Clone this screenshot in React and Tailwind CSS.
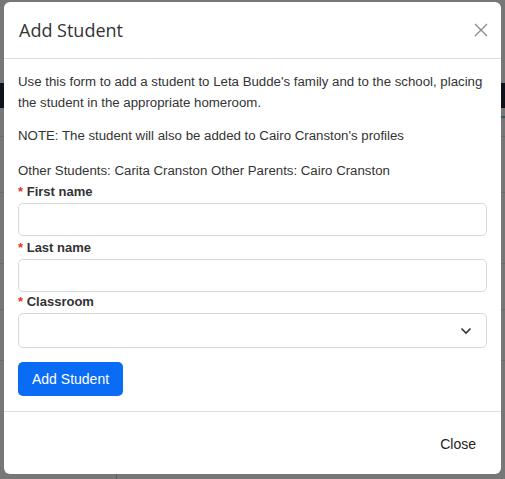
import { useState } from 'react';

// page that sits under the dimmed backdrop
function PageBehind() {
  return (
    <div className="absolute inset-0 bg-[#777777]">
      <div className="mt-[83px] h-[25px] bg-[#0e131b]" />
      <div className="ml-[480px] mt-[8px] h-[2px] bg-[#3e5566]" />
      <div className="mt-[18px] h-px bg-[#6a6a6a]" />
      <div className="mt-[55px] h-px bg-[#6a6a6a]" />
      <div className="mt-[70px] h-px bg-[#6a6a6a]" />
      <div className="mt-[45px] h-px bg-[#6a6a6a]" />
      <div className="mt-[50px] h-px bg-[#6a6a6a]" />
      <div className="absolute left-[116px] top-[474px] h-[5px] w-px bg-[#5e5e5e]" />
    </div>
  );
}

function Field({ label, children }) {
  return (
    <div>
      <label className="block text-[13px] font-bold leading-[18px] text-[#333]">
        <span className="text-[#e5332a]">*</span> {label}
      </label>
      {children}
    </div>
  );
}

export default function App() {
  const [first, setFirst] = useState('');
  const [last, setLast] = useState('');
  const [room, setRoom] = useState('');

  return (
    <div className="relative h-[479px] w-[505px] overflow-hidden font-['Liberation_Sans',Arial,sans-serif]">
      <PageBehind />
      <div className="absolute left-[4px] top-[2px] flex h-[472px] w-[497px] flex-col rounded-[6px] bg-white">
        <div className="flex h-[57px] items-center justify-between border-b border-[#dedede] pl-[15px] pr-[8px]">
          <h2 className="font-['Open_Sans',sans-serif] text-[18px] text-[#333]">Add Student</h2>
          <button className="flex h-6 w-6 items-center justify-center text-[#8a8a8a]">
            <svg width="14" height="14" viewBox="0 0 14 14" fill="none" stroke="currentColor" strokeWidth="1.3">
              <path d="M1 1l12 12M13 1L1 13" />
            </svg>
          </button>
        </div>

        <div className="px-[14px] pt-[12px] text-[13.25px] leading-[21px] text-[#333]">
          <p>
            Use this form to add a student to Leta Budde's family and to the school, placing the student in the
            appropriate homeroom.
          </p>
          <p className="mt-[12px]">NOTE: The student will also be added to Cairo Cranston's profiles</p>
          <p className="mt-[14px]">Other Students: Carita Cranston Other Parents: Cairo Cranston</p>

          <div className="mt-[2px]">
            <Field label="First name">
              <input
                value={first}
                onChange={(e) => setFirst(e.target.value)}
                className="mt-[2px] block h-[33px] w-full rounded-[5px] border border-[#d8d8d8] px-3 outline-none"
              />
            </Field>
          </div>
          <div className="mt-[3px]">
            <Field label="Last name">
              <input
                value={last}
                onChange={(e) => setLast(e.target.value)}
                className="mt-[2px] block h-[33px] w-full rounded-[5px] border border-[#d8d8d8] px-3 outline-none"
              />
            </Field>
          </div>
          <div className="mt-[1px]">
            <Field label="Classroom">
              <div className="relative mt-[2px]">
                <select
                  value={room}
                  onChange={(e) => setRoom(e.target.value)}
                  className="block h-[35px] w-full appearance-none rounded-[5px] border border-[#d8d8d8] bg-white px-3 outline-none"
                >
                  <option value="" />
                </select>
                <svg
                  className="pointer-events-none absolute right-[15px] top-[14px] text-[#333]"
                  width="12"
                  height="8"
                  viewBox="0 0 12 8"
                  fill="none"
                  stroke="currentColor"
                  strokeWidth="1.6"
                >
                  <path d="M1.5 1.5L6 6l4.5-4.5" />
                </svg>
              </div>
            </Field>
          </div>

          <button className="mt-[14px] h-[34px] rounded-[5px] bg-[#0a6cf5] px-[14px] text-[14px] text-white">
            Add Student
          </button>
        </div>

        <div className="mt-[15px] flex flex-1 items-center justify-end border-t border-[#dedede] pr-[25px] pt-[3px]">
          <button className="text-[14px] text-[#222]">Close</button>
        </div>
      </div>
    </div>
  );
}
